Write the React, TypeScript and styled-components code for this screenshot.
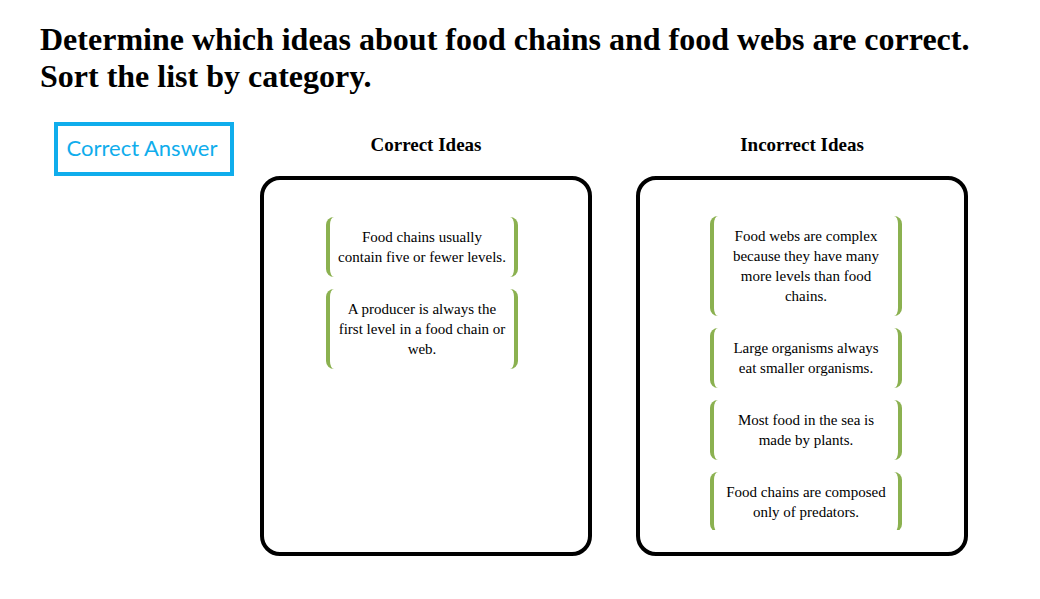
import React from 'react';
import styled, { createGlobalStyle } from 'styled-components';

const GlobalStyle = createGlobalStyle`
  * { box-sizing: border-box; }
  body { margin: 0; background: #fff; color: #000; font-family: "Liberation Serif", "Times New Roman", serif; }
`;

const Page = styled.main`
  padding: 21px 40px 20px;
`;

const Title = styled.h1`
  margin: 0;
  font-size: 32px;
  line-height: 37px;
`;

const Board = styled.div`
  display: flex;
  align-items: flex-start;
  gap: 26px;
  margin-top: 27px;
  padding-left: 14px;
`;

const AnswerButton = styled.button`
  flex: none;
  width: 180px;
  height: 54px;
  padding: 0 4px 3px 0;
  border: 4px solid #10adec;
  background: #fff;
  color: #10adec;
  font: 22px Lato, Carlito, sans-serif;
  white-space: nowrap;
`;

const Columns = styled.div`
  display: flex;
  flex: 1;
  gap: 44px;
`;

const Column = styled.section`
  display: flex;
  flex: 1;
  flex-direction: column;
  max-width: 332px;
`;

const Heading = styled.h2`
  margin: 0;
  padding: 11px 0 19px;
  font-size: 19px;
  line-height: 24px;
  text-align: center;
`;

const Bin = styled.ul<{ $side: 'left' | 'right' }>`
  display: flex;
  flex-direction: column;
  align-items: center;
  gap: 12px;
  flex: 1;
  min-height: 380px;
  margin: 0;
  padding: ${({ $side }) => ($side === 'left' ? '37px 8px 20px 0' : '36px 0 20px 8px')};
  border: 4px solid #000;
  border-radius: 20px;
  list-style: none;
`;

const Idea = styled.li<{ $cut: boolean }>`
  width: 192px;
  padding: 10px 8px;
  border: solid #8bb150;
  border-width: 0 4px;
  border-radius: 8px;
  clip-path: ${({ $cut }) => ($cut ? 'inset(0 0 2px 0)' : 'none')};
  font-size: 15px;
  line-height: 20px;
  text-align: center;
  white-space: pre-line;
`;

type ColumnData = {
  title: string;
  side: 'left' | 'right';
  ideas: { text: string; cut?: boolean }[];
};

const columns: ColumnData[] = [
  {
    title: 'Correct Ideas',
    side: 'left',
    ideas: [
      { text: 'Food chains usually\ncontain five or fewer levels.' },
      { text: 'A producer is always the first level in a food chain or web.' },
    ],
  },
  {
    title: 'Incorrect Ideas',
    side: 'right',
    ideas: [
      { text: 'Food webs are complex because they have many more levels than food chains.' },
      { text: 'Large organisms always\neat smaller organisms.' },
      { text: 'Most food in the sea is made by plants.' },
      { text: 'Food chains are composed only of predators.', cut: true },
    ],
  },
];

export default function App() {
  return (
    <>
      <GlobalStyle />
      <Page>
        <Title>
          Determine which ideas about food chains and food webs are correct.
          <br />
          Sort the list by category.
        </Title>
        <Board>
          <AnswerButton type="button">Correct Answer</AnswerButton>
          <Columns>
            {columns.map((column) => (
              <Column key={column.title}>
                <Heading>{column.title}</Heading>
                <Bin $side={column.side}>
                  {column.ideas.map((idea) => (
                    <Idea key={idea.text} $cut={Boolean(idea.cut)}>
                      {idea.text}
                    </Idea>
                  ))}
                </Bin>
              </Column>
            ))}
          </Columns>
        </Board>
      </Page>
    </>
  );
}
